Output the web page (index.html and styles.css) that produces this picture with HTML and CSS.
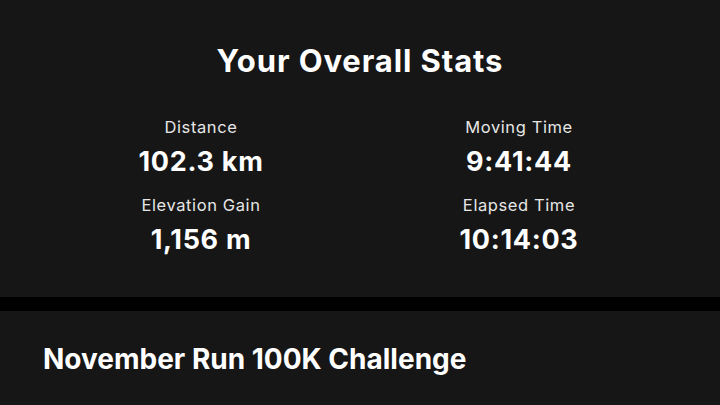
FILE: index.html
```html
<!DOCTYPE html>
<html>
<head>
<meta charset="utf-8">
<link rel="stylesheet" href="styles.css">
</head>
<body>
<section class="stats">
  <h1 class="stats-title">Your Overall Stats</h1>
  <div class="stats-grid">
    <div class="stat">
      <div class="stat-label">Distance</div>
      <div class="stat-value">102.3 km</div>
    </div>
    <div class="stat">
      <div class="stat-label">Moving Time</div>
      <div class="stat-value">9:41:44</div>
    </div>
    <div class="stat">
      <div class="stat-label">Elevation Gain</div>
      <div class="stat-value">1,156 m</div>
    </div>
    <div class="stat">
      <div class="stat-label">Elapsed Time</div>
      <div class="stat-value">10:14:03</div>
    </div>
  </div>
</section>
<div class="divider"></div>
<section class="challenge">
  <h2 class="challenge-title">November Run 100K Challenge</h2>
</section>
</body>
</html>
```
FILE: styles.css
```css
html, body {
  margin: 0;
  padding: 0;
  background: #161616;
  color: #ffffff;
  font-family: Inter, "Noto Sans", sans-serif;
}
body {
  width: 720px;
  height: 405px;
  overflow: hidden;
}
.stats {
  padding: 41px 42px 0;
  height: 297px;
  box-sizing: border-box;
}
.stats-title {
  margin: 0;
  text-align: center;
  font-size: 31px;
  font-weight: 700;
  line-height: 40px;
  letter-spacing: 0.9px;
}
.stats-grid {
  margin-top: 35px;
  display: grid;
  grid-template-columns: 1fr 1fr;
  row-gap: 8px;
}
.stat {
  display: flex;
  flex-direction: column;
  align-items: center;
}
.stat-label {
  font-size: 16.5px;
  line-height: 22px;
  color: #e6e6e6;
  font-weight: 400;
  letter-spacing: 0.6px;
}
.stat-value {
  font-size: 27px;
  line-height: 48px;
  font-weight: 700;
  letter-spacing: 0.7px;
}
.divider {
  height: 14px;
  background: #000000;
}
.challenge {
  padding: 31px 43px 0;
}
.challenge-title {
  margin: 0;
  font-size: 28px;
  font-weight: 700;
  line-height: 34px;
}
```
